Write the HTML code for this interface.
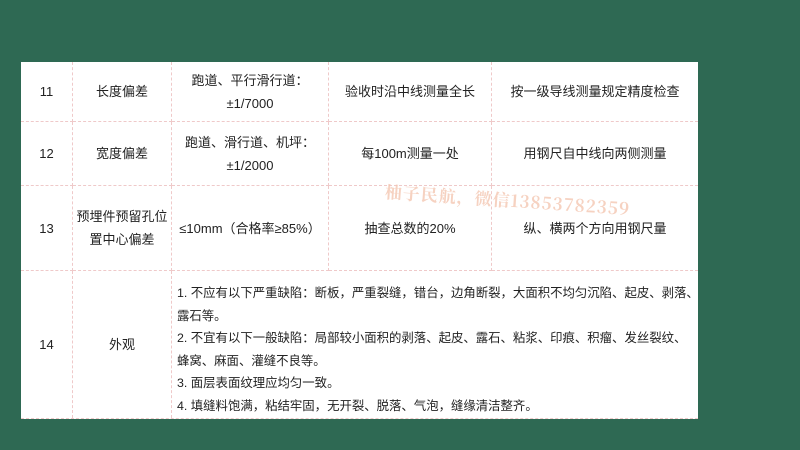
<!DOCTYPE html>
<html><head><meta charset="utf-8"><style>
body{margin:0;width:800px;height:450px;background:#2e6953;position:relative;overflow:hidden;font-family:"Liberation Sans","Noto Sans CJK SC",sans-serif;color:#222;}
#t{position:absolute;left:21px;top:62px;width:677px;height:357px;background:#fff;border-bottom:1px dashed #efc9c9;box-sizing:border-box;}
.c{position:absolute;display:flex;align-items:center;justify-content:center;text-align:center;font-size:13px;line-height:23px;box-sizing:border-box;border-right:1px dashed #efc9c9;border-bottom:1px dashed #efc9c9;}
#w{position:absolute;left:385px;top:178px;font-size:17px;color:#f3c3ad;transform:rotate(4deg);transform-origin:left;font-family:"Noto Serif CJK SC","Liberation Serif",serif;font-weight:bold;letter-spacing:1px;white-space:nowrap;opacity:.75}
#p{position:absolute;left:156px;top:220px;font-size:12.4px;line-height:22.6px;white-space:nowrap;}
</style></head><body>
<div id="t">
<div class="c" style="left:0;top:0;width:52px;height:60px">11</div>
<div class="c" style="left:52px;top:0;width:99px;height:60px">长度偏差</div>
<div class="c" style="left:151px;top:0;width:157px;height:60px">跑道、平行滑行道：<br>±1/7000</div>
<div class="c" style="left:308px;top:0;width:163px;height:60px">验收时沿中线测量全长</div>
<div class="c" style="left:471px;top:0;width:206px;height:60px;border-right:none">按一级导线测量规定精度检查</div>

<div class="c" style="left:0;top:60px;width:52px;height:64px">12</div>
<div class="c" style="left:52px;top:60px;width:99px;height:64px">宽度偏差</div>
<div class="c" style="left:151px;top:60px;width:157px;height:64px">跑道、滑行道、机坪：<br>±1/2000</div>
<div class="c" style="left:308px;top:60px;width:163px;height:64px">每100m测量一处</div>
<div class="c" style="left:471px;top:60px;width:206px;height:64px;border-right:none">用钢尺自中线向两侧测量</div>

<div class="c" style="left:0;top:124px;width:52px;height:85px">13</div>
<div class="c" style="left:52px;top:124px;width:99px;height:85px">预埋件预留孔位<br>置中心偏差</div>
<div class="c" style="left:151px;top:124px;width:157px;height:85px">≤10mm（合格率≥85%）</div>
<div class="c" style="left:308px;top:124px;width:163px;height:85px">抽查总数的20%</div>
<div class="c" style="left:471px;top:124px;width:206px;height:85px;border-right:none">纵、横两个方向用钢尺量</div>

<div class="c" style="left:0;top:209px;width:52px;height:147px;border-bottom:none">14</div>
<div class="c" style="left:52px;top:209px;width:99px;height:147px;border-bottom:none">外观</div>
<div id="p">1. 不应有以下严重缺陷：断板，严重裂缝，错台，边角断裂，大面积不均匀沉陷、起皮、剥落、<br>露石等。<br>2. 不宜有以下一般缺陷：局部较小面积的剥落、起皮、露石、粘浆、印痕、积瘤、发丝裂纹、<br>蜂窝、麻面、灌缝不良等。<br>3. 面层表面纹理应均匀一致。<br>4. 填缝料饱满，粘结牢固，无开裂、脱落、气泡，缝缘清洁整齐。</div>
</div>
<div id="w">柚子民航，微信13853782359</div>
</body></html>
